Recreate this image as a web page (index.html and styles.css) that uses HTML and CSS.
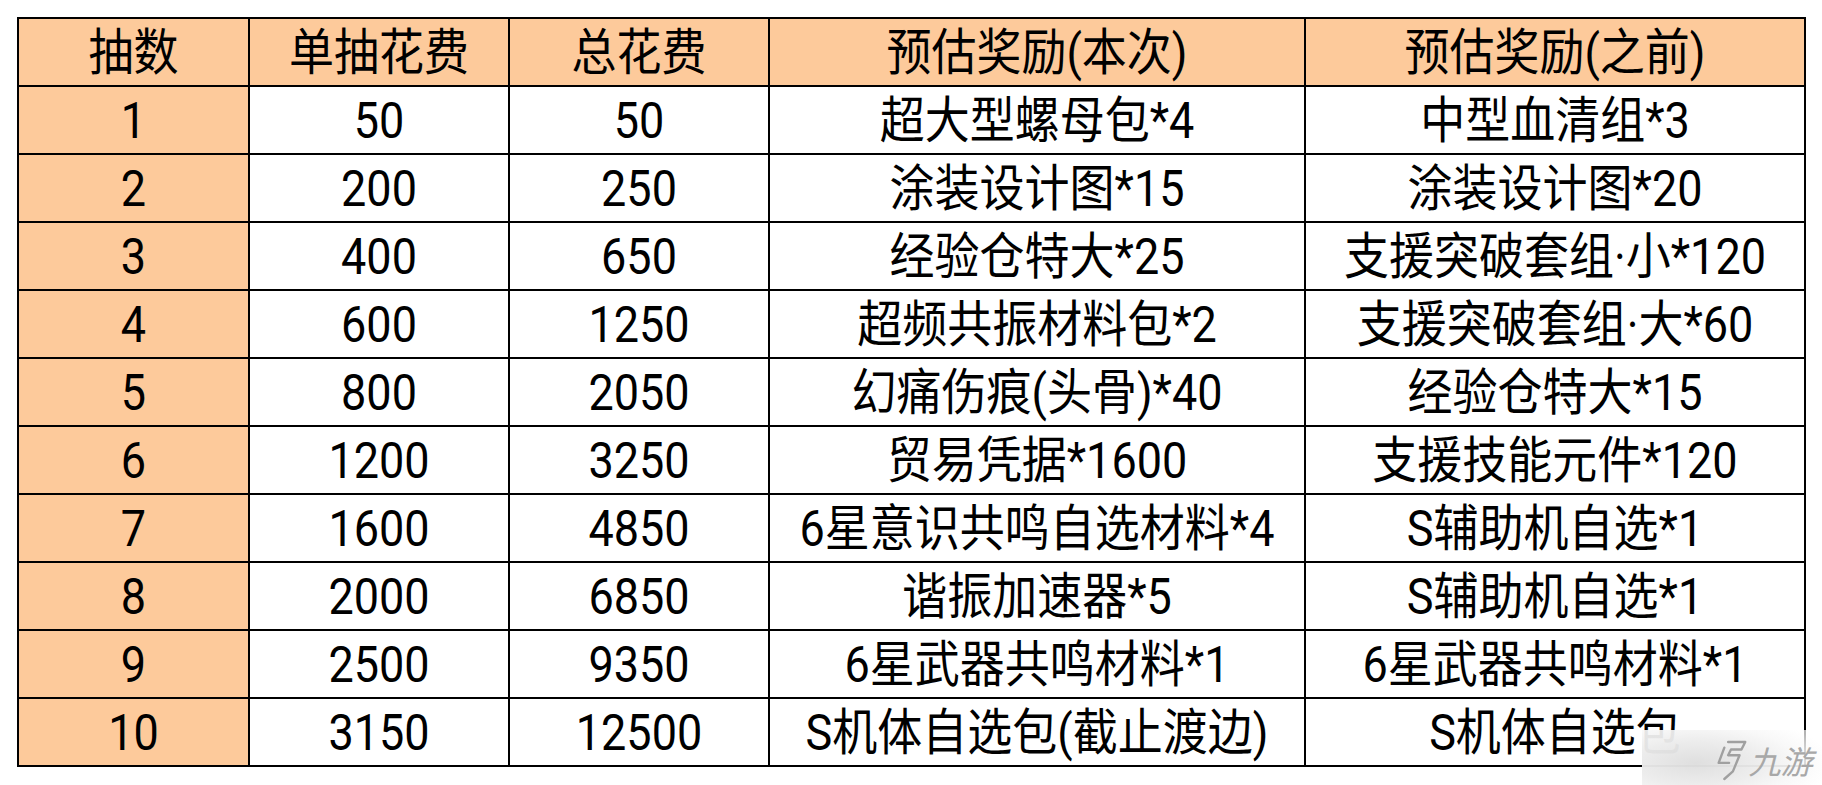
FILE: index.html
```html
<!DOCTYPE html>
<html lang="zh-CN">
<head>
<meta charset="utf-8">
<link rel="stylesheet" href="styles.css">
</head>
<body>
<table class="gacha">
  <colgroup>
    <col class="c1"><col class="c2"><col class="c3"><col class="c4"><col class="c5">
  </colgroup>
  <thead>
    <tr><th><span class="t">抽数</span></th><th><span class="t">单抽花费</span></th><th><span class="t">总花费</span></th><th><span class="t">预估奖励(本次)</span></th><th><span class="t">预估奖励(之前)</span></th></tr>
  </thead>
  <tbody>
    <tr><td class="idx"><span class="t">1</span></td><td><span class="t">50</span></td><td><span class="t">50</span></td><td><span class="t">超大型螺母包*4</span></td><td><span class="t">中型血清组*3</span></td></tr>
    <tr><td class="idx"><span class="t">2</span></td><td><span class="t">200</span></td><td><span class="t">250</span></td><td><span class="t">涂装设计图*15</span></td><td><span class="t">涂装设计图*20</span></td></tr>
    <tr><td class="idx"><span class="t">3</span></td><td><span class="t">400</span></td><td><span class="t">650</span></td><td><span class="t">经验仓特大*25</span></td><td><span class="t">支援突破套组·小*120</span></td></tr>
    <tr><td class="idx"><span class="t">4</span></td><td><span class="t">600</span></td><td><span class="t">1250</span></td><td><span class="t">超频共振材料包*2</span></td><td><span class="t">支援突破套组·大*60</span></td></tr>
    <tr><td class="idx"><span class="t">5</span></td><td><span class="t">800</span></td><td><span class="t">2050</span></td><td><span class="t">幻痛伤痕(头骨)*40</span></td><td><span class="t">经验仓特大*15</span></td></tr>
    <tr><td class="idx"><span class="t">6</span></td><td><span class="t">1200</span></td><td><span class="t">3250</span></td><td><span class="t">贸易凭据*1600</span></td><td><span class="t">支援技能元件*120</span></td></tr>
    <tr><td class="idx"><span class="t">7</span></td><td><span class="t">1600</span></td><td><span class="t">4850</span></td><td><span class="t">6星意识共鸣自选材料*4</span></td><td><span class="t">S辅助机自选*1</span></td></tr>
    <tr><td class="idx"><span class="t">8</span></td><td><span class="t">2000</span></td><td><span class="t">6850</span></td><td><span class="t">谐振加速器*5</span></td><td><span class="t">S辅助机自选*1</span></td></tr>
    <tr><td class="idx"><span class="t">9</span></td><td><span class="t">2500</span></td><td><span class="t">9350</span></td><td><span class="t">6星武器共鸣材料*1</span></td><td><span class="t">6星武器共鸣材料*1</span></td></tr>
    <tr><td class="idx"><span class="t">10</span></td><td><span class="t">3150</span></td><td><span class="t">12500</span></td><td><span class="t">S机体自选包(截止渡边)</span></td><td><span class="t">S机体自选包</span></td></tr>
  </tbody>
</table>
<div class="watermark">
  <svg class="wm-logo" viewBox="0 0 40 48" width="38" height="46">
    <path d="M17 5 L35 5 L31 13 L20 13 L17 19 L29 19 L22 36 L13 44" fill="none" stroke="#a0a0a0" stroke-width="2.5" stroke-linejoin="round" stroke-linecap="round"/>
    <path d="M13 11 L7 27 L18 27" fill="none" stroke="#a0a0a0" stroke-width="2.5" stroke-linejoin="round" stroke-linecap="round"/>
  </svg>
  <span class="wm-text">九游</span>
</div>
</body>
</html>
```
FILE: styles.css
```css
html, body {
  margin: 0;
  padding: 0;
  background: #ffffff;
}
body {
  position: relative;
  width: 1822px;
  height: 785px;
  overflow: hidden;
  font-family: Roboto, "Noto Sans CJK SC", sans-serif;
  color: #000;
}
.gacha {
  border-collapse: collapse;
  margin: 17px 0 0 17px;
  table-layout: fixed;
  width: 1787px;
}
.c1 { width: 231px; }
.c2 { width: 260px; }
.c3 { width: 260px; }
.c4 { width: 536px; }
.c5 { width: 500px; }
.gacha th, .gacha td {
  border: 2px solid #000;
  height: 66px;
  padding: 0;
  text-align: center;
  vertical-align: middle;
  font-size: 45px;
  font-weight: 400;
  line-height: 1;
  white-space: nowrap;
}
.t {
  display: inline-block;
  transform: scaleY(1.1);
}
.gacha th { background: #fdca9b; }
.gacha td.idx { background: #fdca9b; }
.watermark {
  position: absolute;
  left: 1642px;
  top: 730px;
  width: 180px;
  height: 55px;
  background: radial-gradient(ellipse 75% 90% at 30% 60%, rgba(222,222,222,0.98) 0%, rgba(236,236,236,0.96) 45%, rgba(248,248,248,0.92) 75%, rgba(255,255,255,0.7) 100%);
  display: flex;
  align-items: center;
  padding-left: 70px;
  padding-top: 4px;
  box-sizing: border-box;
  gap: 2px;
}
.wm-logo { flex: none; }
.wm-text {
  font-family: "Noto Sans CJK SC", sans-serif;
  font-size: 32px;
  color: #a8a8a8;
  display: inline-block;
  transform: skewX(-14deg);
}
```
